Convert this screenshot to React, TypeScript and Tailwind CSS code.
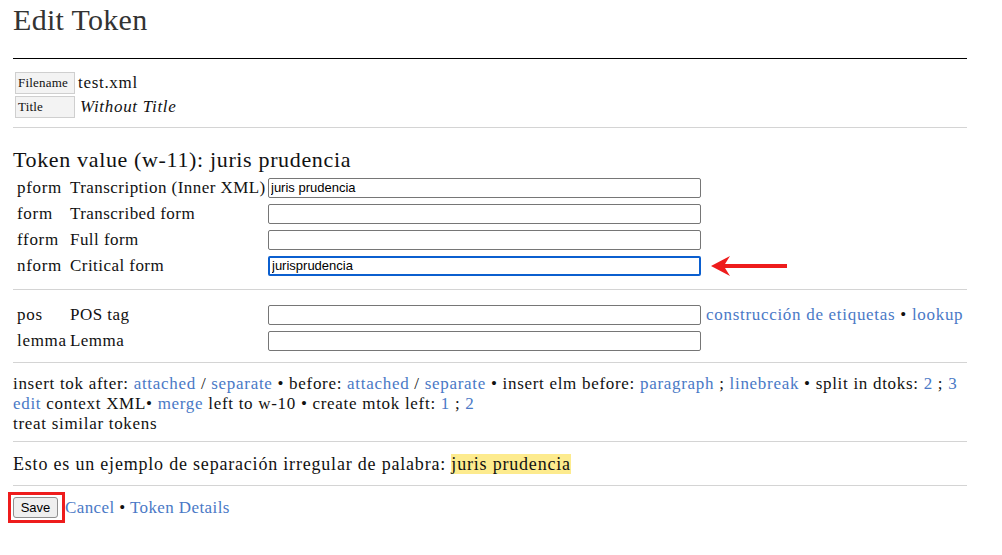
import React from "react";

const serif = { fontFamily: '"Liberation Serif", "DejaVu Serif", serif' };

const Link = ({ children }: { children: React.ReactNode }) => (
  <a href="#" className="text-[#4a79c6] no-underline">
    {children}
  </a>
);

const FieldRow = ({
  code,
  label,
  value,
  focused,
  after,
}: {
  code: string;
  label: string;
  value?: string;
  focused?: boolean;
  after?: React.ReactNode;
}) => (
  <div className="flex h-[26px] items-center">
    <div className="w-[57px] shrink-0 whitespace-nowrap pl-[4px]">{code}</div>
    <div className="w-[198px] shrink-0 whitespace-nowrap tracking-[0.45px]">{label}</div>
    <input
      readOnly
      value={value ?? ""}
      className={
        "h-[20px] w-[433px] shrink-0 rounded-[2px] bg-white px-[2px] text-[13px] tracking-normal text-black outline-none " +
        (focused ? "border-2 border-[#0b5fcf]" : "border border-[#767676]")
      }
      style={{ fontFamily: '"Liberation Sans", Arial, sans-serif' }}
    />
    {after}
  </div>
);

export default function App() {
  return (
    <div className="min-h-[555px] bg-white text-[17px] leading-[20px] tracking-[0.7px] text-[#111]" style={serif}>
      <div className="w-[967px] pl-[13px]">
        <h1 className="pt-[3px] text-[30px] leading-[34px] tracking-[0.3px] text-[#333]">Edit Token</h1>
        <hr className="mt-[21px] border-t border-black" />

        <table className="mt-[11px] ml-[2px] border-separate border-spacing-y-[2px]">
          <tbody>
            <tr>
              <td className="h-[22px] w-[60px] border border-[#cfcfcf] bg-[#f3f3f3] px-[2px] text-[13px] leading-[20px] tracking-[0.2px]">
                Filename
              </td>
              <td className="pl-[3px]">test.xml</td>
            </tr>
            <tr>
              <td className="h-[22px] w-[60px] border border-[#cfcfcf] bg-[#f3f3f3] px-[2px] text-[13px] leading-[20px] tracking-[0.2px]">
                Title
              </td>
              <td className="pl-[5px] italic">Without Title</td>
            </tr>
          </tbody>
        </table>
        <hr className="mt-[7px] border-t border-[#d4d4d4]" />

        <div className="mt-[20px] text-[22px] leading-[24px] tracking-[0.65px]">Token value (w-11): juris prudencia</div>
        <div className="mt-[3px]">
          <FieldRow code="pform" label="Transcription (Inner XML)" value="juris prudencia" />
          <FieldRow code="form" label="Transcribed form" />
          <FieldRow code="fform" label="Full form" />
          <FieldRow
            code="nform"
            label="Critical form"
            value="jurisprudencia"
            focused
            after={
              <svg width="80" height="22" viewBox="0 0 80 22" className="ml-[9px] shrink-0">
                <path d="M1 11 L20 1 L15 9 L77 9 L77 13 L15 13 L20 21 Z" fill="#ee1c1c" />
              </svg>
            }
          />
        </div>
        <hr className="mt-[10px] border-t border-[#d4d4d4]" />

        <div className="mt-[12px]">
          <FieldRow
            code="pos"
            label="POS tag"
            after={
              <span className="ml-[5px] whitespace-nowrap">
                <Link>construcción de etiquetas</Link> • <Link>lookup</Link>
              </span>
            }
          />
          <FieldRow code="lemma" label="Lemma" />
        </div>
        <hr className="mt-[8px] border-t border-[#d4d4d4]" />

        <div className="mt-[11px] leading-[20px]">
          <div className="whitespace-nowrap">
            insert tok after: <Link>attached</Link> / <Link>separate</Link> • before: <Link>attached</Link> /{" "}
            <Link>separate</Link> • insert elm before: <Link>paragraph</Link> ; <Link>linebreak</Link> • split in
            dtoks: <Link>2</Link> ; <Link>3</Link>
          </div>
          <div>
            <Link>edit</Link> context XML• <Link>merge</Link> left to w-10 • create mtok left: <Link>1</Link> ;{" "}
            <Link>2</Link>
          </div>
          <div>treat similar tokens</div>
        </div>
        <hr className="mt-[7px] border-t border-[#d4d4d4]" />

        <div className="mt-[10px] text-[18px] leading-[24px] tracking-[0.8px]">
          Esto es un ejemplo de separación irregular de palabra:{" "}
          <span className="bg-[#fdeb8e]">juris prudencia</span>
        </div>
        <hr className="mt-[9px] border-t border-[#d4d4d4]" />

        <div className="mt-[6px] flex items-center">
          <div className="ml-[-5px] border-[3px] border-[#ee1c1c] py-[2px] pl-[2px] pr-[4px]">
            <button
              className="block h-[21px] w-[45px] rounded-[3px] border border-[#8f8f8f] bg-[#efefef] text-[13px] leading-[19px] tracking-normal text-black"
              style={{ fontFamily: '"Liberation Sans", Arial, sans-serif' }}
            >
              Save
            </button>
          </div>
          <span className="tracking-[0.4px]">
            <Link>Cancel</Link> • <Link>Token Details</Link>
          </span>
        </div>
      </div>
    </div>
  );
}
